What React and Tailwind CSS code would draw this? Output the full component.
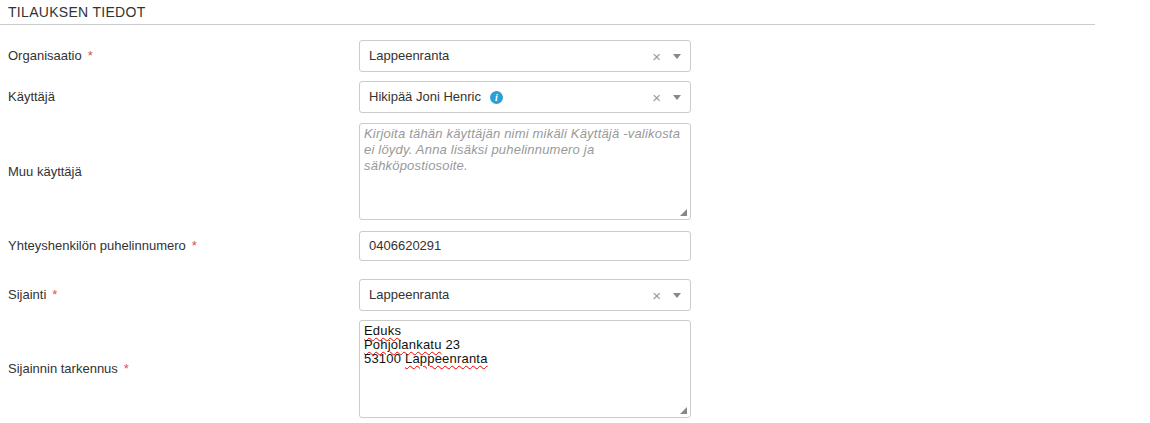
import React from "react";

const Star = () => <span className="text-[#d9534f] ml-[6px]">*</span>;

const Caret = () => (
  <div className="flex items-center gap-[12px] text-[#999]">
    <span className="text-[15px] leading-none">×</span>
    <span className="w-0 h-0 border-l-[4px] border-r-[4px] border-t-[5px] border-l-transparent border-r-transparent border-t-[#888]" />
  </div>
);

const Grip = () => (
  <svg className="absolute right-[3px] bottom-[3px]" width="7" height="7" viewBox="0 0 7 7">
    <path d="M7 0 L7 7 L0 7 Z" fill="#888" />
  </svg>
);

const Row = ({ label, req, mt, children, h }) => (
  <div className={`flex items-center ${mt}`}>
    <div className="w-[359px] pl-[8px] shrink-0">
      {label}
      {req && <Star />}
    </div>
    <div className={`w-[332px] ${h}`}>{children}</div>
  </div>
);

const Select = ({ children }) => (
  <div className="h-full border border-[#ccc] rounded-[3px] flex items-center justify-between pl-[9px] pr-[9px] bg-white">
    <div className="flex items-center">{children}</div>
    <Caret />
  </div>
);

const W = ({ children }) => (
  <span className="underline decoration-wavy decoration-[#e00] decoration-[1px] underline-offset-[2px]">{children}</span>
);

export default function App() {
  return (
    <div className="w-[1150px] h-[423px] bg-white text-[13px] text-[#333] overflow-hidden" style={{ fontFamily: '"Liberation Sans", Arial, sans-serif' }}>
      <div className="pl-[8px] pt-[5px] pb-[5px] text-[14px] w-[1095px] border-b border-[#ccc] text-[#333] tracking-[0.3px] leading-[14px]">TILAUKSEN TIEDOT</div>
      <Row label="Organisaatio" req mt="mt-[15px]" h="h-[32px]">
        <Select>Lappeenranta</Select>
      </Row>
      <Row label="Käyttäjä" mt="mt-[9px]" h="h-[32px]">
        <Select>
          Hikipää Joni Henric
          <span className="ml-[9px] w-[13px] h-[13px] rounded-full bg-[#2a9fd6] text-white text-[10px] font-bold italic flex items-center justify-center" style={{ fontFamily: "Georgia, serif" }}>i</span>
        </Select>
      </Row>
      <Row label="Muu käyttäjä" mt="mt-[10px]" h="h-[97px]">
        <div className="relative h-full border border-[#ccc] rounded-[3px] px-[4px] py-[2px] italic text-[#999] leading-[16px] tracking-[0.2px]">
          Kirjoita tähän käyttäjän nimi mikäli Käyttäjä -valikosta ei löydy. Anna lisäksi puhelinnumero ja sähköpostiosoite.
          <Grip />
        </div>
      </Row>
      <Row label="Yhteyshenkilön puhelinnumero" req mt="mt-[11px]" h="h-[30px]">
        <div className="h-full border border-[#ccc] rounded-[3px] flex items-center pl-[9px]">0406620291</div>
      </Row>
      <Row label="Sijainti" req mt="mt-[18px]" h="h-[32px]">
        <Select>Lappeenranta</Select>
      </Row>
      <Row label="Sijainnin tarkennus" req mt="mt-[9px]" h="h-[98px]">
        <div className="relative h-full border border-[#ccc] rounded-[3px] px-[4px] pt-[3px] leading-[14px] text-[#111] tracking-[0.2px]">
          <div><W>Eduks</W></div>
          <div><W>Pohjolankatu</W> 23</div>
          <div>53100 <W>Lappeenranta</W></div>
          <Grip />
        </div>
      </Row>
    </div>
  );
}
